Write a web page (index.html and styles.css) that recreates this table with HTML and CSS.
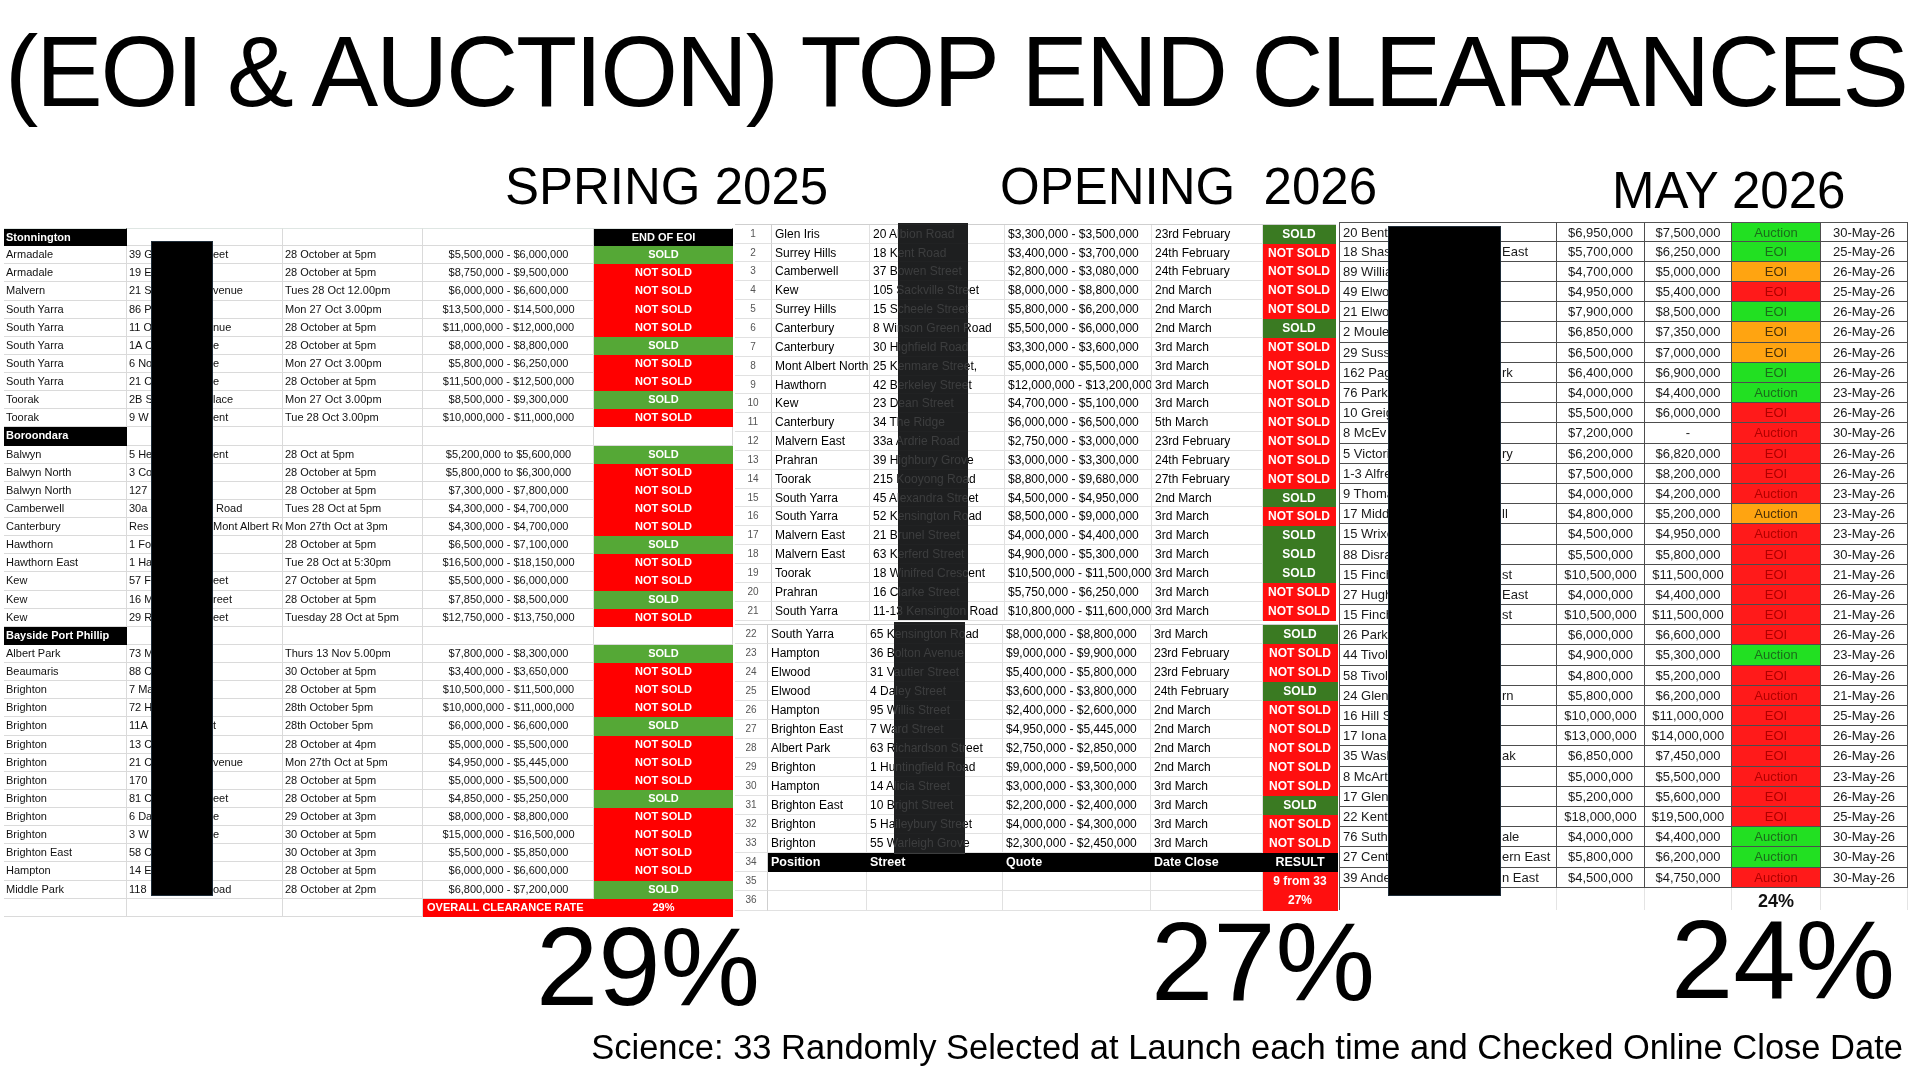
FILE: index.html
```html
<!DOCTYPE html>
<html lang="en">
<head>
<meta charset="utf-8">
<title>(EOI &amp; AUCTION) TOP END CLEARANCES</title>
<link rel="stylesheet" href="styles.css">
</head>
<body>
<h1 class="title">(EOI &amp; AUCTION) TOP END CLEARANCES</h1>

<div class="heads">
  <div class="hd hd1">SPRING 2025</div>
  <div class="hd hd2">OPENING  2026</div>
  <div class="hd hd3">MAY 2026</div>
</div>

<div class="cols">
  <!-- SPRING 2025 -->
  <div class="col">
    <div class="lt">
      <div class="lr first"><div class="blk">Stonnington</div><div></div><div></div><div></div><div class="blk ctr">END OF EOI</div></div>
      <div class="lr"><div>Armadale</div><div><span class="pre">39 G</span>eet</div><div>28 October at 5pm</div><div class="q">$5,500,000 - $6,000,000</div><div class="s">SOLD</div></div>
      <div class="lr"><div>Armadale</div><div><span class="pre">19 E</span></div><div>28 October at 5pm</div><div class="q">$8,750,000 - $9,500,000</div><div class="n">NOT SOLD</div></div>
      <div class="lr"><div>Malvern</div><div><span class="pre">21 S</span>venue</div><div>Tues 28 Oct 12.00pm</div><div class="q">$6,000,000 - $6,600,000</div><div class="n">NOT SOLD</div></div>
      <div class="lr"><div>South Yarra</div><div><span class="pre">86 P</span></div><div>Mon 27 Oct 3.00pm</div><div class="q">$13,500,000 - $14,500,000</div><div class="n">NOT SOLD</div></div>
      <div class="lr"><div>South Yarra</div><div><span class="pre">11 O</span>nue</div><div>28 October at 5pm</div><div class="q">$11,000,000 - $12,000,000</div><div class="n">NOT SOLD</div></div>
      <div class="lr"><div>South Yarra</div><div><span class="pre">1A C</span>e</div><div>28 October at 5pm</div><div class="q">$8,000,000 - $8,800,000</div><div class="s">SOLD</div></div>
      <div class="lr"><div>South Yarra</div><div><span class="pre">6 No</span>e</div><div>Mon 27 Oct 3.00pm</div><div class="q">$5,800,000 - $6,250,000</div><div class="n">NOT SOLD</div></div>
      <div class="lr"><div>South Yarra</div><div><span class="pre">21 O</span>e</div><div>28 October at 5pm</div><div class="q">$11,500,000 - $12,500,000</div><div class="n">NOT SOLD</div></div>
      <div class="lr"><div>Toorak</div><div><span class="pre">2B S</span>lace</div><div>Mon 27 Oct 3.00pm</div><div class="q">$8,500,000 - $9,300,000</div><div class="s">SOLD</div></div>
      <div class="lr"><div>Toorak</div><div><span class="pre">9 W</span>ent</div><div>Tue 28 Oct 3.00pm</div><div class="q">$10,000,000 - $11,000,000</div><div class="n">NOT SOLD</div></div>
      <div class="lr"><div class="blk">Boroondara</div><div></div><div></div><div></div><div></div></div>
      <div class="lr"><div>Balwyn</div><div><span class="pre">5 He</span>ent</div><div>28 Oct at 5pm</div><div class="q">$5,200,000 to $5,600,000</div><div class="s">SOLD</div></div>
      <div class="lr"><div>Balwyn North</div><div><span class="pre">3 Co</span></div><div>28 October at 5pm</div><div class="q">$5,800,000 to $6,300,000</div><div class="n">NOT SOLD</div></div>
      <div class="lr"><div>Balwyn North</div><div><span class="pre">127</span></div><div>28 October at 5pm</div><div class="q">$7,300,000 - $7,800,000</div><div class="n">NOT SOLD</div></div>
      <div class="lr"><div>Camberwell</div><div><span class="pre">30a</span> Road</div><div>Tues 28 Oct at 5pm</div><div class="q">$4,300,000 - $4,700,000</div><div class="n">NOT SOLD</div></div>
      <div class="lr"><div>Canterbury</div><div><span class="pre">Res</span>Mont Albert Rc</div><div>Mon 27th Oct at 3pm</div><div class="q">$4,300,000 - $4,700,000</div><div class="n">NOT SOLD</div></div>
      <div class="lr"><div>Hawthorn</div><div><span class="pre">1 Fo</span></div><div>28 October at 5pm</div><div class="q">$6,500,000 - $7,100,000</div><div class="s">SOLD</div></div>
      <div class="lr"><div>Hawthorn East</div><div><span class="pre">1 Ha</span></div><div>Tue 28 Oct at 5:30pm</div><div class="q">$16,500,000 - $18,150,000</div><div class="n">NOT SOLD</div></div>
      <div class="lr"><div>Kew</div><div><span class="pre">57 F</span>eet</div><div>27 October at 5pm</div><div class="q">$5,500,000 - $6,000,000</div><div class="n">NOT SOLD</div></div>
      <div class="lr"><div>Kew</div><div><span class="pre">16 M</span>reet</div><div>28 October at 5pm</div><div class="q">$7,850,000 - $8,500,000</div><div class="s">SOLD</div></div>
      <div class="lr"><div>Kew</div><div><span class="pre">29 R</span>eet</div><div>Tuesday 28 Oct at 5pm</div><div class="q">$12,750,000 - $13,750,000</div><div class="n">NOT SOLD</div></div>
      <div class="lr"><div class="blk">Bayside Port Phillip</div><div></div><div></div><div></div><div></div></div>
      <div class="lr"><div>Albert Park</div><div><span class="pre">73 M</span></div><div>Thurs 13 Nov 5.00pm</div><div class="q">$7,800,000 - $8,300,000</div><div class="s">SOLD</div></div>
      <div class="lr"><div>Beaumaris</div><div><span class="pre">88 C</span></div><div>30 October at 5pm</div><div class="q">$3,400,000 - $3,650,000</div><div class="n">NOT SOLD</div></div>
      <div class="lr"><div>Brighton</div><div><span class="pre">7 Ma</span></div><div>28 October at 5pm</div><div class="q">$10,500,000 - $11,500,000</div><div class="n">NOT SOLD</div></div>
      <div class="lr"><div>Brighton</div><div><span class="pre">72 H</span></div><div>28th October 5pm</div><div class="q">$10,000,000 - $11,000,000</div><div class="n">NOT SOLD</div></div>
      <div class="lr"><div>Brighton</div><div><span class="pre">11A</span>t</div><div>28th October 5pm</div><div class="q">$6,000,000 - $6,600,000</div><div class="s">SOLD</div></div>
      <div class="lr"><div>Brighton</div><div><span class="pre">13 C</span></div><div>28 October at 4pm</div><div class="q">$5,000,000 - $5,500,000</div><div class="n">NOT SOLD</div></div>
      <div class="lr"><div>Brighton</div><div><span class="pre">21 C</span>venue</div><div>Mon 27th Oct at 5pm</div><div class="q">$4,950,000 - $5,445,000</div><div class="n">NOT SOLD</div></div>
      <div class="lr"><div>Brighton</div><div><span class="pre">170</span></div><div>28 October at 5pm</div><div class="q">$5,000,000 - $5,500,000</div><div class="n">NOT SOLD</div></div>
      <div class="lr"><div>Brighton</div><div><span class="pre">81 C</span>eet</div><div>28 October at 5pm</div><div class="q">$4,850,000 - $5,250,000</div><div class="s">SOLD</div></div>
      <div class="lr"><div>Brighton</div><div><span class="pre">6 Da</span>e</div><div>29 October at 3pm</div><div class="q">$8,000,000 - $8,800,000</div><div class="n">NOT SOLD</div></div>
      <div class="lr"><div>Brighton</div><div><span class="pre">3 W</span>e</div><div>30 October at 5pm</div><div class="q">$15,000,000 - $16,500,000</div><div class="n">NOT SOLD</div></div>
      <div class="lr"><div>Brighton East</div><div><span class="pre">58 C</span></div><div>30 October at 3pm</div><div class="q">$5,500,000 - $5,850,000</div><div class="n">NOT SOLD</div></div>
      <div class="lr"><div>Hampton</div><div><span class="pre">14 E</span></div><div>28 October at 5pm</div><div class="q">$6,000,000 - $6,600,000</div><div class="n">NOT SOLD</div></div>
      <div class="lr"><div>Middle Park</div><div><span class="pre">118</span>oad</div><div>28 October at 2pm</div><div class="q">$6,800,000 - $7,200,000</div><div class="s">SOLD</div></div>
      <div class="lr last"><div></div><div></div><div></div><div class="ov">OVERALL CLEARANCE RATE</div><div class="n">29%</div></div>
      <div class="redact lt-redact"></div>
    </div>
    <div class="pct pct1">29%</div>
  </div>

  <!-- OPENING 2026 -->
  <div class="col">
    <div class="mt mt1">
      <div class="mr"><div class="mn">1</div><div>Glen Iris</div><div>20 Albion Road</div><div>$3,300,000 - $3,500,000</div><div>23rd February</div><div class="ms">SOLD</div></div>
      <div class="mr"><div class="mn">2</div><div>Surrey Hills</div><div>18 Kent Road</div><div>$3,400,000 - $3,700,000</div><div>24th February</div><div class="mx">NOT SOLD</div></div>
      <div class="mr"><div class="mn">3</div><div>Camberwell</div><div>37 Bowen Street</div><div>$2,800,000 - $3,080,000</div><div>24th February</div><div class="mx">NOT SOLD</div></div>
      <div class="mr"><div class="mn">4</div><div>Kew</div><div>105 Sackville Street</div><div>$8,000,000 - $8,800,000</div><div>2nd March</div><div class="mx">NOT SOLD</div></div>
      <div class="mr"><div class="mn">5</div><div>Surrey Hills</div><div>15 Scheele Street</div><div>$5,800,000 - $6,200,000</div><div>2nd March</div><div class="mx">NOT SOLD</div></div>
      <div class="mr"><div class="mn">6</div><div>Canterbury</div><div>8 Winson Green Road</div><div>$5,500,000 - $6,000,000</div><div>2nd March</div><div class="ms">SOLD</div></div>
      <div class="mr"><div class="mn">7</div><div>Canterbury</div><div>30 Highfield Road</div><div>$3,300,000 - $3,600,000</div><div>3rd March</div><div class="mx">NOT SOLD</div></div>
      <div class="mr"><div class="mn">8</div><div>Mont Albert North</div><div>25 Kenmare Street,</div><div>$5,000,000 - $5,500,000</div><div>3rd March</div><div class="mx">NOT SOLD</div></div>
      <div class="mr"><div class="mn">9</div><div>Hawthorn</div><div>42 Berkeley Street</div><div>$12,000,000 - $13,200,000</div><div>3rd March</div><div class="mx">NOT SOLD</div></div>
      <div class="mr"><div class="mn">10</div><div>Kew</div><div>23 Dean Street</div><div>$4,700,000 - $5,100,000</div><div>3rd March</div><div class="mx">NOT SOLD</div></div>
      <div class="mr"><div class="mn">11</div><div>Canterbury</div><div>34 The Ridge</div><div>$6,000,000 - $6,500,000</div><div>5th March</div><div class="mx">NOT SOLD</div></div>
      <div class="mr"><div class="mn">12</div><div>Malvern East</div><div>33a Ardrie Road</div><div>$2,750,000 - $3,000,000</div><div>23rd February</div><div class="mx">NOT SOLD</div></div>
      <div class="mr"><div class="mn">13</div><div>Prahran</div><div>39 Highbury Grove</div><div>$3,000,000 - $3,300,000</div><div>24th February</div><div class="mx">NOT SOLD</div></div>
      <div class="mr"><div class="mn">14</div><div>Toorak</div><div>215 Kooyong Road</div><div>$8,800,000 - $9,680,000</div><div>27th February</div><div class="mx">NOT SOLD</div></div>
      <div class="mr"><div class="mn">15</div><div>South Yarra</div><div>45 Alexandra Street</div><div>$4,500,000 - $4,950,000</div><div>2nd March</div><div class="ms">SOLD</div></div>
      <div class="mr"><div class="mn">16</div><div>South Yarra</div><div>52 Kensington Road</div><div>$8,500,000 - $9,000,000</div><div>3rd March</div><div class="mx">NOT SOLD</div></div>
      <div class="mr"><div class="mn">17</div><div>Malvern East</div><div>21 Brunel Street</div><div>$4,000,000 - $4,400,000</div><div>3rd March</div><div class="ms">SOLD</div></div>
      <div class="mr"><div class="mn">18</div><div>Malvern East</div><div>63 Kerferd Street</div><div>$4,900,000 - $5,300,000</div><div>3rd March</div><div class="ms">SOLD</div></div>
      <div class="mr"><div class="mn">19</div><div>Toorak</div><div>18 Winifred Crescent</div><div>$10,500,000 - $11,500,000</div><div>3rd March</div><div class="ms">SOLD</div></div>
      <div class="mr"><div class="mn">20</div><div>Prahran</div><div>16 Clarke Street</div><div>$5,750,000 - $6,250,000</div><div>3rd March</div><div class="mx">NOT SOLD</div></div>
      <div class="mr"><div class="mn">21</div><div>South Yarra</div><div>11-13 Kensington Road</div><div>$10,800,000 - $11,600,000</div><div>3rd March</div><div class="mx">NOT SOLD</div></div>
      <div class="mredact mredact1"></div>
    </div>
    <div class="mt mt2">
      <div class="mr"><div class="mn">22</div><div>South Yarra</div><div>65 Kensington Road</div><div>$8,000,000 - $8,800,000</div><div>3rd March</div><div class="ms">SOLD</div></div>
      <div class="mr"><div class="mn">23</div><div>Hampton</div><div>36 Bolton Avenue</div><div>$9,000,000 - $9,900,000</div><div>23rd February</div><div class="mx">NOT SOLD</div></div>
      <div class="mr"><div class="mn">24</div><div>Elwood</div><div>31 Vautier Street</div><div>$5,400,000 - $5,800,000</div><div>23rd February</div><div class="mx">NOT SOLD</div></div>
      <div class="mr"><div class="mn">25</div><div>Elwood</div><div>4 Daley Street</div><div>$3,600,000 - $3,800,000</div><div>24th February</div><div class="ms">SOLD</div></div>
      <div class="mr"><div class="mn">26</div><div>Hampton</div><div>95 Willis Street</div><div>$2,400,000 - $2,600,000</div><div>2nd March</div><div class="mx">NOT SOLD</div></div>
      <div class="mr"><div class="mn">27</div><div>Brighton East</div><div>7 Ward Street</div><div>$4,950,000 - $5,445,000</div><div>2nd March</div><div class="mx">NOT SOLD</div></div>
      <div class="mr"><div class="mn">28</div><div>Albert Park</div><div>63 Richardson Street</div><div>$2,750,000 - $2,850,000</div><div>2nd March</div><div class="mx">NOT SOLD</div></div>
      <div class="mr"><div class="mn">29</div><div>Brighton</div><div>1 Huntingfield Road</div><div>$9,000,000 - $9,500,000</div><div>2nd March</div><div class="mx">NOT SOLD</div></div>
      <div class="mr"><div class="mn">30</div><div>Hampton</div><div>14 Alicia Street</div><div>$3,000,000 - $3,300,000</div><div>3rd March</div><div class="mx">NOT SOLD</div></div>
      <div class="mr"><div class="mn">31</div><div>Brighton East</div><div>10 Bright Street</div><div>$2,200,000 - $2,400,000</div><div>3rd March</div><div class="ms">SOLD</div></div>
      <div class="mr"><div class="mn">32</div><div>Brighton</div><div>5 Haileybury Street</div><div>$4,000,000 - $4,300,000</div><div>3rd March</div><div class="mx">NOT SOLD</div></div>
      <div class="mr"><div class="mn">33</div><div>Brighton</div><div>55 Warleigh Grove</div><div>$2,300,000 - $2,450,000</div><div>3rd March</div><div class="mx">NOT SOLD</div></div>
      <div class="mr mhead"><div class="mn">34</div><div>Position</div><div>Street</div><div>Quote</div><div>Date Close</div><div class="mres">RESULT</div></div>
      <div class="mr"><div class="mn">35</div><div></div><div></div><div></div><div></div><div class="mx">9 from 33</div></div>
      <div class="mr"><div class="mn">36</div><div></div><div></div><div></div><div></div><div class="mx">27%</div></div>
      <div class="mredact mredact2"></div>
    </div>
    <div class="pct pct2">27%</div>
  </div>

  <!-- MAY 2026 -->
  <div class="col">
    <div class="rt">
      <div class="rr"><div><span class="rpre">20 Bent</span></div><div>$6,950,000</div><div>$7,500,000</div><div class="tg">Auction</div><div>30-May-26</div></div>
      <div class="rr"><div><span class="rpre">18 Shas</span>East</div><div>$5,700,000</div><div>$6,250,000</div><div class="tg">EOI</div><div>25-May-26</div></div>
      <div class="rr"><div><span class="rpre">89 Willia</span></div><div>$4,700,000</div><div>$5,000,000</div><div class="to">EOI</div><div>26-May-26</div></div>
      <div class="rr"><div><span class="rpre">49 Elwo</span></div><div>$4,950,000</div><div>$5,400,000</div><div class="tr">EOI</div><div>25-May-26</div></div>
      <div class="rr"><div><span class="rpre">21 Elwo</span></div><div>$7,900,000</div><div>$8,500,000</div><div class="tg">EOI</div><div>26-May-26</div></div>
      <div class="rr"><div><span class="rpre">2 Moule</span></div><div>$6,850,000</div><div>$7,350,000</div><div class="to">EOI</div><div>26-May-26</div></div>
      <div class="rr"><div><span class="rpre">29 Suss</span></div><div>$6,500,000</div><div>$7,000,000</div><div class="to">EOI</div><div>26-May-26</div></div>
      <div class="rr"><div><span class="rpre">162 Pag</span>rk</div><div>$6,400,000</div><div>$6,900,000</div><div class="tg">EOI</div><div>26-May-26</div></div>
      <div class="rr"><div><span class="rpre">76 Park</span></div><div>$4,000,000</div><div>$4,400,000</div><div class="tg">Auction</div><div>23-May-26</div></div>
      <div class="rr"><div><span class="rpre">10 Greig</span></div><div>$5,500,000</div><div>$6,000,000</div><div class="tr">EOI</div><div>26-May-26</div></div>
      <div class="rr"><div><span class="rpre">8 McEv</span></div><div>$7,200,000</div><div>-</div><div class="tr">Auction</div><div>30-May-26</div></div>
      <div class="rr"><div><span class="rpre">5 Victori</span>ry</div><div>$6,200,000</div><div>$6,820,000</div><div class="tr">EOI</div><div>26-May-26</div></div>
      <div class="rr"><div><span class="rpre">1-3 Alfre</span></div><div>$7,500,000</div><div>$8,200,000</div><div class="tr">EOI</div><div>26-May-26</div></div>
      <div class="rr"><div><span class="rpre">9 Thoma</span></div><div>$4,000,000</div><div>$4,200,000</div><div class="tr">Auction</div><div>23-May-26</div></div>
      <div class="rr"><div><span class="rpre">17 Midd</span>ll</div><div>$4,800,000</div><div>$5,200,000</div><div class="to">Auction</div><div>23-May-26</div></div>
      <div class="rr"><div><span class="rpre">15 Wrixo</span></div><div>$4,500,000</div><div>$4,950,000</div><div class="tr">Auction</div><div>23-May-26</div></div>
      <div class="rr"><div><span class="rpre">88 Disra</span></div><div>$5,500,000</div><div>$5,800,000</div><div class="tr">EOI</div><div>30-May-26</div></div>
      <div class="rr"><div><span class="rpre">15 Finch</span>st</div><div>$10,500,000</div><div>$11,500,000</div><div class="tr">EOI</div><div>21-May-26</div></div>
      <div class="rr"><div><span class="rpre">27 Hugh</span>East</div><div>$4,000,000</div><div>$4,400,000</div><div class="tr">EOI</div><div>26-May-26</div></div>
      <div class="rr"><div><span class="rpre">15 Finch</span>st</div><div>$10,500,000</div><div>$11,500,000</div><div class="tr">EOI</div><div>21-May-26</div></div>
      <div class="rr"><div><span class="rpre">26 Park</span></div><div>$6,000,000</div><div>$6,600,000</div><div class="tr">EOI</div><div>26-May-26</div></div>
      <div class="rr"><div><span class="rpre">44 Tivol</span></div><div>$4,900,000</div><div>$5,300,000</div><div class="tg">Auction</div><div>23-May-26</div></div>
      <div class="rr"><div><span class="rpre">58 Tivol</span></div><div>$4,800,000</div><div>$5,200,000</div><div class="tr">EOI</div><div>26-May-26</div></div>
      <div class="rr"><div><span class="rpre">24 Glen</span>rn</div><div>$5,800,000</div><div>$6,200,000</div><div class="tr">Auction</div><div>21-May-26</div></div>
      <div class="rr"><div><span class="rpre">16 Hill S</span></div><div>$10,000,000</div><div>$11,000,000</div><div class="tr">EOI</div><div>25-May-26</div></div>
      <div class="rr"><div><span class="rpre">17 Iona</span></div><div>$13,000,000</div><div>$14,000,000</div><div class="tr">EOI</div><div>26-May-26</div></div>
      <div class="rr"><div><span class="rpre">35 Wash</span>ak</div><div>$6,850,000</div><div>$7,450,000</div><div class="tr">EOI</div><div>26-May-26</div></div>
      <div class="rr"><div><span class="rpre">8 McArt</span></div><div>$5,000,000</div><div>$5,500,000</div><div class="tr">Auction</div><div>23-May-26</div></div>
      <div class="rr"><div><span class="rpre">17 Glen</span></div><div>$5,200,000</div><div>$5,600,000</div><div class="tr">EOI</div><div>26-May-26</div></div>
      <div class="rr"><div><span class="rpre">22 Kent</span></div><div>$18,000,000</div><div>$19,500,000</div><div class="tr">EOI</div><div>25-May-26</div></div>
      <div class="rr"><div><span class="rpre">76 Suth</span>ale</div><div>$4,000,000</div><div>$4,400,000</div><div class="tg">Auction</div><div>30-May-26</div></div>
      <div class="rr"><div><span class="rpre">27 Cent</span>ern East</div><div>$5,800,000</div><div>$6,200,000</div><div class="tg">Auction</div><div>30-May-26</div></div>
      <div class="rr"><div><span class="rpre">39 Ande</span>n East</div><div>$4,500,000</div><div>$4,750,000</div><div class="tr">Auction</div><div>30-May-26</div></div>
      <div class="rr rtot"><div></div><div></div><div></div><div class="rsum">24%</div><div></div></div>
      <div class="redact rt-redact"></div>
    </div>
    <div class="pct pct3">24%</div>
  </div>
</div>

<p class="note">Science: 33 Randomly Selected at Launch each time and Checked Online Close Date</p>
</body>
</html>
```
FILE: styles.css
```css
* { box-sizing: border-box; }

html, body {
  margin: 0;
  padding: 0;
}

body {
  width: 1920px;
  height: 1079px;
  overflow: hidden;
  background: #fff;
  color: #000;
  font-family: "Liberation Sans", Arial, sans-serif;
}

/* ---------- Title & headings ---------- */
.title {
  margin: 0;
  padding: 21px 0 0 5px;
  font-size: 100px;
  line-height: 1;
  font-weight: normal;
  letter-spacing: -2.25px;
  white-space: nowrap;
}

.heads {
  display: grid;
  grid-template-columns: 735px 602px 583px;
  align-items: start;
  height: 50px;
  margin-top: 39.5px;
  font-size: 51px;
  line-height: 1;
}

.hd { white-space: pre; }
.hd1 { padding-left: 505px; }
.hd2 { padding-left: 265px; }
.hd3 { padding-left: 275px; padding-top: 4px; }

/* ---------- Columns ---------- */
.cols {
  display: grid;
  grid-template-columns: 735px 602px 583px;
  align-items: start;
}

.col {
  display: flex;
  flex-direction: column;
}

.pct {
  font-size: 112px;
  line-height: 0.75;
  white-space: nowrap;
}
.pct1 { padding-left: 536px; margin-top: 8.5px; }
.pct2 { padding-left: 416px; margin-top: 9px; }
.pct3 { padding-left: 334px; margin-top: 8px; }

.note {
  margin: 20.3px 0 0;
  padding-right: 17px;
  text-align: right;
  font-size: 34.5px;
  line-height: 1;
  white-space: nowrap;
}

/* ---------- Redaction boxes ---------- */
.redact {
  position: absolute;
  background: #000;
  border: 1px solid #1e2c38;
}

/* ---------- Left table (Spring 2025) ---------- */
.lt {
  position: relative;
  margin: 17.5px 0 0 4px;
  width: 729px;
  font-size: 11px;
  color: #111;
}

.lr {
  display: grid;
  grid-template-columns: 123px 156px 140px 171px 139px;
  height: 18.13px;
}

.lr > div {
  border-right: 1px solid #dadada;
  border-bottom: 1px solid #dadada;
  padding: 0 1px 0 2px;
  line-height: 17px;
  white-space: nowrap;
  overflow: hidden;
}

.lr.first > div { border-top: 1px solid #dfe6e3; line-height: 16px; }

.lr .q { text-align: center; }

.lr .blk {
  background: #000;
  color: #fff;
  font-weight: bold;
  border-color: #000;
}

.lr .ctr { text-align: center; }

.lr .s,
.lr .n {
  color: #fff;
  font-weight: bold;
  text-align: center;
}

.lr .s { background: #55a836; border-color: #55a836; }
.lr .n { background: #ff0000; border-color: #ff0000; }

.lr .ov {
  background: #ff0000;
  border-color: #ff0000;
  color: #fff;
  font-weight: bold;
  padding-left: 4px;
}

.lt .pre {
  display: inline-block;
  width: 84px;
  overflow: hidden;
  vertical-align: top;
}

.lt-redact {
  left: 147px;
  top: 13px;
  width: 62px;
  height: 655px;
}

/* ---------- Middle table (Opening 2026) ---------- */
.mt {
  position: relative;
  font-size: 12px;
  color: #000;
}

.mt1 {
  margin-top: 13.3px;
  width: 601px;
  border-top: 1px solid #cfcfcf;
}

.mt2 {
  margin-top: 3.3px;
  width: 603px;
  border-top: 1px solid #cfcfcf;
}

.mr {
  display: grid;
  height: 18.85px;
}

.mt1 .mr { grid-template-columns: 37px 98px 135px 147px 111px 73px; }
.mt2 .mr { grid-template-columns: 33px 99px 136px 148px 112px 75px; height: 19.05px; }

.mr > div {
  border-right: 1px solid #e1e1e1;
  border-bottom: 1px solid #e1e1e1;
  padding-left: 3px;
  line-height: 18px;
  white-space: nowrap;
  overflow: hidden;
}

.mr .mn {
  padding-left: 0;
  text-align: center;
  font-size: 10px;
  color: #555;
  border-right-color: #cfcfcf;
}

.mr .ms,
.mr .mx {
  padding-left: 0;
  text-align: center;
  color: #fff;
  font-weight: bold;
}

.mr .ms { background: #3a7a22; border-color: #3a7a22; }
.mr .mx { background: #ff0f0f; border-color: #ff0f0f; }

.mhead > div:not(.mn) {
  background: #000;
  border-color: #000;
  color: #fff;
  font-weight: bold;
  font-size: 12.5px;
}

.mhead .mres { text-align: center; padding-left: 0; }

.mredact {
  position: absolute;
  background: rgba(60, 62, 64, 0.5);
  -webkit-backdrop-filter: invert(1) brightness(0.24);
  backdrop-filter: invert(1) brightness(0.24);
}

.mredact1 {
  left: 163px;
  top: -2px;
  width: 70px;
  height: 397px;
}

.mredact2 {
  left: 159px;
  top: -3px;
  width: 71px;
  height: 232px;
}

/* ---------- Right table (May 2026) ---------- */
.rt {
  position: relative;
  margin: 11px 0 0 2px;
  width: 570px;
  font-size: 13px;
  color: #1a1a1a;
  border-left: 1px solid #555;
}

.rr {
  display: grid;
  grid-template-columns: 217px 88px 87px 89px 87px;
  height: 20.2px;
}

.rr:first-child > div { border-top: 1px solid #555; }

.rr > div {
  border-right: 1px solid #4d4d4d;
  border-bottom: 1.5px solid #4d4d4d;
  line-height: 19px;
  text-align: center;
  white-space: nowrap;
  overflow: hidden;
}

.rr > div:first-child {
  text-align: left;
  padding-left: 3px;
}

.rpre {
  display: inline-block;
  width: 159px;
  overflow: hidden;
  vertical-align: top;
}

.rr .tg { background: #22e022; color: #1b6b1b; }
.rr .to { background: #ffa411; color: #4a3208; }
.rr .tr { background: #ff1a1a; color: #b00000; }

.rtot { height: 22px; }
.rtot > div {
  border-bottom: none;
  border-right: 1px solid #e4e4e4;
}
.rtot > div:first-child { border-right-color: #e4e4e4; }

.rr .rsum {
  font-size: 18px;
  font-weight: bold;
  color: #111;
  line-height: 26px;
}

.rt-redact {
  left: 48px;
  top: 4px;
  width: 113px;
  height: 670px;
}
```
